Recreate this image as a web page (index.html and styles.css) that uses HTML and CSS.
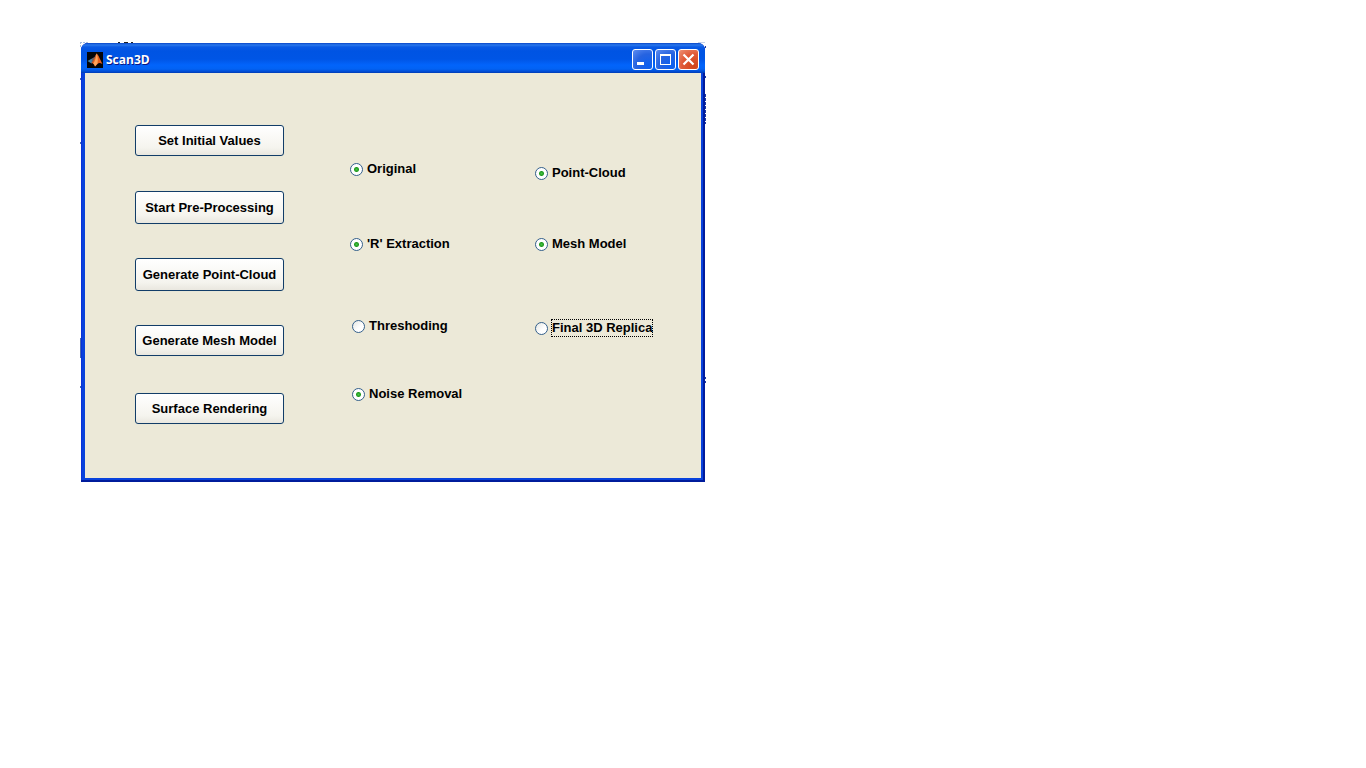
FILE: index.html
```html
<!DOCTYPE html>
<html lang="en">
<head>
<meta charset="utf-8">
<title>Scan3D</title>
<link rel="stylesheet" href="styles.css">
</head>
<body>
<main class="desktop">
  <section class="window" aria-label="Scan3D">
    <svg class="specks" width="626" height="440" aria-hidden="true" shape-rendering="crispEdges">
      <path d="M0 0.5h8M0.5 0v6" stroke="#a9bede" stroke-dasharray="2 1"/>
      <path d="M38 0.5h2M44 0.5h4M51 0.5h2" stroke="#222"/>
      <path d="M0.5 36v2M0.5 100v2M0.5 296v20M0.5 344v2" stroke="#4a6ab0"/>
      <path d="M625.500 4v2M625.500 34v2M625.500 52v30M625.500 335v2M625.500 339v2" stroke="#2038a0" stroke-dasharray="3 1"/>
      <path d="M618 0.500h7" stroke="#c5d2ea"/>
    </svg>
    <header class="titlebar">
      <svg class="logo" width="16" height="16" viewBox="0 0 16 16" aria-hidden="true">
        <rect width="16" height="16" fill="#050608"/>
        <path d="M0.500 9l4.500-2.500 2 1-2.500 4z" fill="#3e86ae"/>
        <path d="M5 6.500L7.500 5 9.500 1.500 8.500 8l-4 3.500z" fill="#75605d"/>
        <path d="M9.500 1.500c2 1 3.500 6 6 10.500-2-1-3.500-1.500-4.500-.5L8 14.500C7.200 12 6 11 4.500 11 7 9 8 5 9.500 1.500z" fill="#e8601e"/>
        <path d="M9.500 1.500c1.500 3 1.500 6 1 10L8 14.500c-.4-1.500-.8-2-1.800-3 2-2.500 2.800-6 3.300-10z" fill="#ffa45a"/>
      </svg>
      <h1 class="title">Scan3D</h1>
      <div class="controls">
        <button class="control" type="button" aria-label="Minimize"><svg width="19" height="19" aria-hidden="true"><path d="M4 12h7v3H4z" fill="#fff"/></svg></button>
        <button class="control" type="button" aria-label="Maximize"><svg width="19" height="19" aria-hidden="true"><path d="M4 4h11v11H4zM5 6v8h9V6z" fill="#fff" fill-rule="evenodd"/></svg></button>
        <button class="control control-close" type="button" aria-label="Close"><svg width="19" height="19" aria-hidden="true"><path d="M4.500 4.500l10 10m0-10l-10 10" stroke="#fff" stroke-width="2.200"/></svg></button>
      </div>
    </header>
    <div class="content">
      <div class="actions">
        <button class="action" type="button">Set Initial Values</button>
        <button class="action action-tall" type="button">Start Pre-Processing</button>
        <button class="action action-tall" type="button">Generate Point-Cloud</button>
        <button class="action" type="button">Generate Mesh Model</button>
        <button class="action" type="button">Surface Rendering</button>
      </div>
      <div class="options options-image">
        <label class="option"><input class="radio" type="radio" name="original" checked><span class="caption">Original</span></label>
        <label class="option"><input class="radio" type="radio" name="extraction" checked><span class="caption">'R' Extraction</span></label>
        <label class="option option-inset"><input class="radio" type="radio" name="threshold"><span class="caption">Threshoding</span></label>
        <label class="option option-inset"><input class="radio" type="radio" name="noise" checked><span class="caption">Noise Removal</span></label>
      </div>
      <div class="options options-model">
        <label class="option"><input class="radio" type="radio" name="cloud" checked><span class="caption">Point-Cloud</span></label>
        <label class="option"><input class="radio" type="radio" name="mesh" checked><span class="caption">Mesh Model</span></label>
        <label class="option"><input class="radio" type="radio" name="replica"><span class="caption caption-focused">Final 3D Replica</span></label>
      </div>
    </div>
  </section>
</main>
</body>
</html>
```
FILE: styles.css
```css
* {
  box-sizing: border-box;
}

body {
  margin: 0;
  background: #fff;
  color: #000;
  font: bold 13px/18px "Liberation Sans", Arial, sans-serif;
}

.desktop {
  display: flex;
  align-items: flex-start;
  padding: 43px 81px;
}

.window {
  position: relative;
  padding: 0 4px 4px;
  border-radius: 7px 7px 0 0;
  background: #0842dc;
  box-shadow: inset -2px -2px #001c9c, inset 1px 0 #0831d9;
}

.specks {
  position: absolute;
  top: -1px;
  left: -1px;
  z-index: -1;
}

.titlebar {
  display: flex;
  align-items: center;
  height: 30px;
  margin: 0 -4px;
  padding: 3px 6px 0;
  border-radius: 7px 7px 0 0;
  background: linear-gradient(#0846c8 0, #2a78ec 2px, #0a5ae4 4px, #0054e3 8px, #0055e5 16px, #0264fb 22px, #0262f4 26px, #0048cc 29px, #003ab0 30px);
}

.logo {
  flex: none;
}

.title {
  margin: 0 0 0 3px;
  color: #fff;
  font: bold 12px/18px "Open Sans", "Noto Sans", sans-serif;
  text-shadow: 1px 1px #0a1883;
}

.controls {
  display: flex;
  gap: 2px;
  margin-left: auto;
}

.control {
  width: 21px;
  height: 21px;
  padding: 0;
  border: 1px solid #fff;
  border-radius: 3px;
  background: radial-gradient(circle at 80% 85%, #0c5ff0, #2663e0 55%, #5f8df0);
}

.control svg {
  display: block;
}

.control-close {
  background: radial-gradient(circle at 80% 85%, #d04418, #e05a38 55%, #ee9276);
}

.content {
  display: flex;
  align-items: flex-start;
  padding: 52px 45px 54px 50px;
  background: #ece9d8;
}

.actions {
  display: grid;
  grid-template-rows: 66px 67px 67px 68px 31px;
  align-items: start;
  margin-right: 66px;
}

.action {
  min-width: 149px;
  height: 31px;
  padding: 0 4px;
  border: 1px solid #123d68;
  border-radius: 3px;
  background: linear-gradient(#fff, #f5f4ee 75%, #e9e7df);
  box-shadow: 0 0 1px #c5d8d8;
  color: #000;
  font: inherit;
}

.action-tall {
  height: 33px;
}

.options {
  display: grid;
  align-items: start;
}

.options-image {
  grid-template-rows: 75px 82px 68px 18px;
  min-width: 185px;
  padding-top: 35px;
}

.options-model {
  grid-template-rows: 71px 84px 18px;
  min-width: 121px;
  padding-top: 39px;
}

.option {
  display: flex;
  align-items: center;
  gap: 3px;
}

.option-inset {
  padding-left: 2px;
}

.radio {
  appearance: none;
  width: 13px;
  height: 13px;
  margin: 0;
  border: 1px solid #34608c;
  border-radius: 50%;
  background: linear-gradient(135deg, #e4e6e2, #fff 60%);
}

.radio:checked {
  background: radial-gradient(circle, #48c545 0, #219a20 2px, #fff 3px);
}

.caption {
  padding: 0 1px;
  white-space: nowrap;
}

.caption-focused {
  outline: 1px dotted #000;
  outline-offset: -1px;
}
```
